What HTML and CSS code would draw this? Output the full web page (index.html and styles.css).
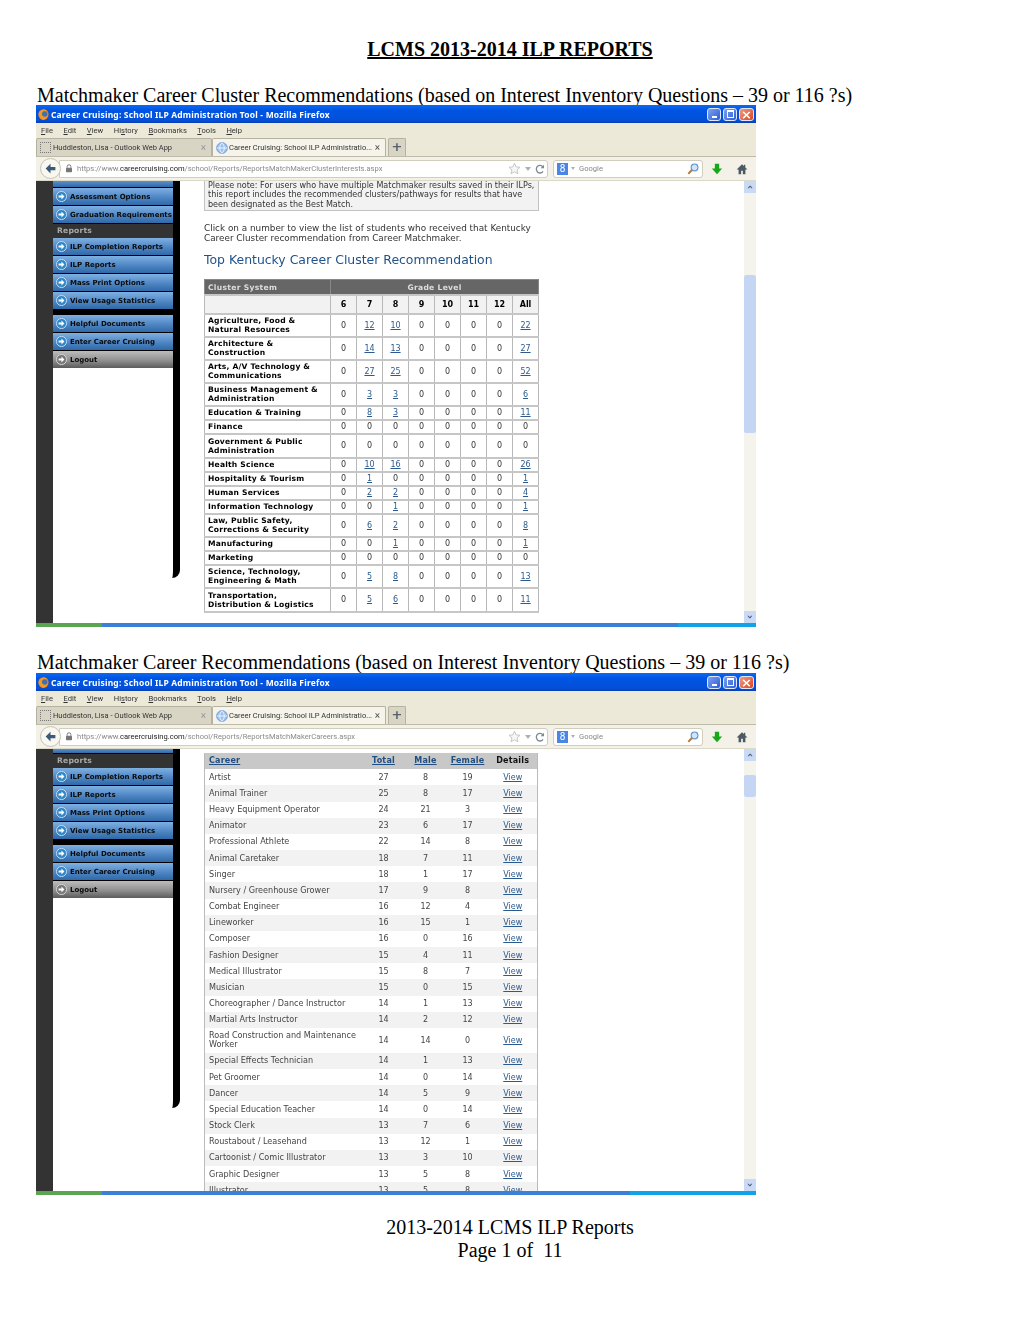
FILE: index.html
```html
<!DOCTYPE html>
<html lang="en">
<head>
  <meta charset="UTF-8" />
  <title>LCMS 2013-2014 ILP Reports</title>
  <link rel="stylesheet" href="styles.css">
</head>
<body>

  <svg class="icon-defs" xmlns="http://www.w3.org/2000/svg">
    <symbol id="i-firefox" viewBox="0 0 16 16">
      <circle cx="8" cy="8" r="7.5" fill="#e8761c"/>
      <circle cx="8.6" cy="8" r="4.6" fill="#3d6fb4"/>
      <path d="M1 6C2 2 6 .4 9 .7c3 .3 5 2 6 4.6-1.4-1.8-3.2-2.4-5-2.3C7.400 3.200 5.600 5 5.800 7.500 6 10 8.500 11.600 11 11c1.500-.4 2.800-1.400 3.600-2.800C14.200 12 11.500 15.500 8 15.500 3.800 15.500.5 11 1 6z" fill="#f09a22"/>
    </symbol>
    <symbol id="i-globe" viewBox="0 0 16 16">
      <circle cx="8" cy="8" r="7.2" fill="#9cc0ec" stroke="#5b8fd6"/>
      <path d="M1 8h14M8 1c-4 4-4 10 0 14M8 1c4 4 4 10 0 14" fill="none" stroke="#f4f8ff" stroke-width="1.200"/>
    </symbol>
    <symbol id="i-back" viewBox="0 0 16 16">
      <path d="M2 8l6-6v4h6v4H8v4z" fill="#3a5a78"/>
    </symbol>
    <symbol id="i-lock" viewBox="0 0 10 12">
      <path d="M2.500 5V3.500a2.500 2.500 0 015 0V5" fill="none" stroke="#777" stroke-width="1.300"/>
      <rect x="1" y="5" width="8" height="6" rx="1" fill="#777"/>
    </symbol>
    <symbol id="i-star" viewBox="0 0 16 16">
      <path d="M8 1.500l2 4.500 4.800.5-3.600 3.200 1 4.800L8 12.100 3.800 14.500l1-4.800L1.200 6.500 6 6z" fill="#f6f6f2" stroke="#b9bdc2"/>
    </symbol>
    <symbol id="i-reload" viewBox="0 0 12 12">
      <path d="M10 4.200A4.200 4.200 0 102 7.800a4.200 4.200 0 007.600 1" fill="none" stroke="#7f8c96" stroke-width="1.600"/>
      <path d="M10.800 1v4.200H6.600z" fill="#7f8c96"/>
    </symbol>
    <symbol id="i-glass" viewBox="0 0 14 14">
      <circle cx="8.800" cy="5.200" r="4" fill="#cfe6fa" stroke="#5f92c4" stroke-width="1.200"/>
      <path d="M5.800 8.200L1.500 12.500" stroke="#b57a3c" stroke-width="2.200"/>
    </symbol>
    <symbol id="i-down" viewBox="0 0 14 14">
      <path d="M4.500 1h5v5.500H13L7 13 1 6.500h3.500z" fill="#17a81a"/>
    </symbol>
    <symbol id="i-home" viewBox="0 0 14 14">
      <path d="M7 1.500L.8 7.500h2.200V13h3V9h2v4h3V7.500h2.200L10.800 5V2H9.300v1.500z" fill="#4c5a63"/>
    </symbol>
    <symbol id="i-go" viewBox="0 0 12 12">
      <circle cx="6" cy="6" r="5.500" fill="#2f86c9" stroke="#cfe3f4"/>
      <path d="M6 2.800L9.200 6 6 9.200V7.200H2.800V4.800H6z" fill="#fff"/>
    </symbol>
    <symbol id="i-go-grey" viewBox="0 0 12 12">
      <circle cx="6" cy="6" r="5.500" fill="#777" stroke="#ddd"/>
      <path d="M6 2.800L9.200 6 6 9.200V7.200H2.800V4.800H6z" fill="#fff"/>
    </symbol>
  </svg>

  <h1 class="doc-title">LCMS 2013-2014 ILP REPORTS</h1>

  <h2 class="doc-heading">Matchmaker Career Cluster Recommendations (based on Interest Inventory Questions – 39 or 116 ?s)</h2>

  <div class="shot shot-clusters">
    <div class="titlebar">
      <svg class="ff-logo"><use href="#i-firefox"/></svg>
      <span class="titlebar-text">Career Cruising: School ILP Administration Tool - Mozilla Firefox</span>
      <span class="win-btn"><i class="win-min"></i></span>
      <span class="win-btn"><i class="win-max"></i></span>
      <span class="win-btn win-close">×</span>
    </div>
    <div class="menubar">
      <span><u>F</u>ile</span><span><u>E</u>dit</span><span><u>V</u>iew</span><span>Hi<u>s</u>tory</span><span><u>B</u>ookmarks</span><span><u>T</u>ools</span><span><u>H</u>elp</span>
    </div>
    <div class="tabbar">
      <div class="tab"><i class="tab-blank"></i><span class="tab-label">Huddleston, Lisa - Outlook Web App</span><span class="tab-x">×</span></div>
      <div class="tab tab-active"><svg class="tab-globe"><use href="#i-globe"/></svg><span class="tab-label">Career Cruising: School ILP Administratio...</span><span class="tab-x">×</span></div>
      <div class="tab-new">+</div>
    </div>
    <div class="navbar">
      <div class="back-btn"><svg><use href="#i-back"/></svg></div>
      <div class="urlbar">
        <svg class="url-lock"><use href="#i-lock"/></svg>
        <span class="url-text">https://www.<b>careercruising.com</b>/school/Reports/ReportsMatchMakerClusterInterests.aspx</span>
        <svg class="url-star"><use href="#i-star"/></svg>
        <i class="caret"></i>
        <svg class="url-reload"><use href="#i-reload"/></svg>
      </div>
      <div class="searchbar">
        <span class="g-box">8</span><i class="caret"></i>
        <span class="search-text">Google</span>
        <svg class="search-glass"><use href="#i-glass"/></svg>
      </div>
      <svg class="tool-down"><use href="#i-down"/></svg>
      <svg class="tool-home"><use href="#i-home"/></svg>
    </div>
    <div class="viewport">
      <div class="rail"></div>
      <div class="side">
        <div class="side-nav">
          <div class="nav-cut nav-cut-a"></div>
          <a class="nav-btn"><svg><use href="#i-go"/></svg>Assessment Options</a>
          <a class="nav-btn"><svg><use href="#i-go"/></svg>Graduation Requirements</a>
          <div class="nav-label">Reports</div>
          <a class="nav-btn"><svg><use href="#i-go"/></svg>ILP Completion Reports</a>
          <a class="nav-btn"><svg><use href="#i-go"/></svg>ILP Reports</a>
          <a class="nav-btn"><svg><use href="#i-go"/></svg>Mass Print Options</a>
          <a class="nav-btn nav-last"><svg><use href="#i-go"/></svg>View Usage Statistics</a>
          <a class="nav-btn"><svg><use href="#i-go"/></svg>Helpful Documents</a>
          <a class="nav-btn"><svg><use href="#i-go"/></svg>Enter Career Cruising</a>
          <a class="nav-btn nav-grey"><svg><use href="#i-go-grey"/></svg>Logout</a>
        </div>
      </div>
      <div class="main">
        <div class="note">Please note: For users who have multiple Matchmaker results saved in their ILPs, this report includes the recommended clusters/pathways for results that have been designated as the Best Match.</div>
        <p class="intro">Click on a number to view the list of students who received that Kentucky Career Cluster recommendation from Career Matchmaker.</p>
        <h3 class="report-title">Top Kentucky Career Cluster Recommendation</h3>
        <table class="cluster-table">
          <colgroup><col class="col-name"><col span="8" class="col-grade"></colgroup>
          <tr class="cluster-head"><th>Cluster System</th><th colspan="8">Grade Level</th></tr>
          <tr class="cluster-sub"><th></th><th>6</th><th>7</th><th>8</th><th>9</th><th>10</th><th>11</th><th>12</th><th>All</th></tr>
          <tr class="two"><th>Agriculture, Food &amp;<br>Natural Resources</th><td>0</td><td><a>12</a></td><td><a>10</a></td><td>0</td><td>0</td><td>0</td><td>0</td><td><a>22</a></td></tr>
          <tr class="two"><th>Architecture &amp;<br>Construction</th><td>0</td><td><a>14</a></td><td><a>13</a></td><td>0</td><td>0</td><td>0</td><td>0</td><td><a>27</a></td></tr>
          <tr class="two"><th>Arts, A/V Technology &amp;<br>Communications</th><td>0</td><td><a>27</a></td><td><a>25</a></td><td>0</td><td>0</td><td>0</td><td>0</td><td><a>52</a></td></tr>
          <tr class="two"><th>Business Management &amp;<br>Administration</th><td>0</td><td><a>3</a></td><td><a>3</a></td><td>0</td><td>0</td><td>0</td><td>0</td><td><a>6</a></td></tr>
          <tr class="one"><th>Education &amp; Training</th><td>0</td><td><a>8</a></td><td><a>3</a></td><td>0</td><td>0</td><td>0</td><td>0</td><td><a>11</a></td></tr>
          <tr class="one"><th>Finance</th><td>0</td><td>0</td><td>0</td><td>0</td><td>0</td><td>0</td><td>0</td><td>0</td></tr>
          <tr class="two tall"><th>Government &amp; Public<br>Administration</th><td>0</td><td>0</td><td>0</td><td>0</td><td>0</td><td>0</td><td>0</td><td>0</td></tr>
          <tr class="one"><th>Health Science</th><td>0</td><td><a>10</a></td><td><a>16</a></td><td>0</td><td>0</td><td>0</td><td>0</td><td><a>26</a></td></tr>
          <tr class="one"><th>Hospitality &amp; Tourism</th><td>0</td><td><a>1</a></td><td>0</td><td>0</td><td>0</td><td>0</td><td>0</td><td><a>1</a></td></tr>
          <tr class="one"><th>Human Services</th><td>0</td><td><a>2</a></td><td><a>2</a></td><td>0</td><td>0</td><td>0</td><td>0</td><td><a>4</a></td></tr>
          <tr class="one"><th>Information Technology</th><td>0</td><td>0</td><td><a>1</a></td><td>0</td><td>0</td><td>0</td><td>0</td><td><a>1</a></td></tr>
          <tr class="two"><th>Law, Public Safety,<br>Corrections &amp; Security</th><td>0</td><td><a>6</a></td><td><a>2</a></td><td>0</td><td>0</td><td>0</td><td>0</td><td><a>8</a></td></tr>
          <tr class="one"><th>Manufacturing</th><td>0</td><td>0</td><td><a>1</a></td><td>0</td><td>0</td><td>0</td><td>0</td><td><a>1</a></td></tr>
          <tr class="one"><th>Marketing</th><td>0</td><td>0</td><td>0</td><td>0</td><td>0</td><td>0</td><td>0</td><td>0</td></tr>
          <tr class="two"><th>Science, Technology,<br>Engineering &amp; Math</th><td>0</td><td><a>5</a></td><td><a>8</a></td><td>0</td><td>0</td><td>0</td><td>0</td><td><a>13</a></td></tr>
          <tr class="two tall"><th>Transportation,<br>Distribution &amp; Logistics</th><td>0</td><td><a>5</a></td><td><a>6</a></td><td>0</td><td>0</td><td>0</td><td>0</td><td><a>11</a></td></tr>
        </table>
      </div>
      <div class="scrollbar">
        <div class="scroll-btn">‹</div>
        <div class="scroll-thumb"></div>
        <div class="scroll-btn scroll-down">‹</div>
      </div>
    </div>
    <div class="statusbar"><i class="status-green"></i><i class="status-blue"></i><i class="status-cyan"></i></div>
  </div>

  <h2 class="doc-heading doc-heading-next">Matchmaker Career Recommendations (based on Interest Inventory Questions – 39 or 116 ?s)</h2>

  <div class="shot shot-careers">
    <div class="titlebar">
      <svg class="ff-logo"><use href="#i-firefox"/></svg>
      <span class="titlebar-text">Career Cruising: School ILP Administration Tool - Mozilla Firefox</span>
      <span class="win-btn"><i class="win-min"></i></span>
      <span class="win-btn"><i class="win-max"></i></span>
      <span class="win-btn win-close">×</span>
    </div>
    <div class="menubar">
      <span><u>F</u>ile</span><span><u>E</u>dit</span><span><u>V</u>iew</span><span>Hi<u>s</u>tory</span><span><u>B</u>ookmarks</span><span><u>T</u>ools</span><span><u>H</u>elp</span>
    </div>
    <div class="tabbar">
      <div class="tab"><i class="tab-blank"></i><span class="tab-label">Huddleston, Lisa - Outlook Web App</span><span class="tab-x">×</span></div>
      <div class="tab tab-active"><svg class="tab-globe"><use href="#i-globe"/></svg><span class="tab-label">Career Cruising: School ILP Administratio...</span><span class="tab-x">×</span></div>
      <div class="tab-new">+</div>
    </div>
    <div class="navbar">
      <div class="back-btn"><svg><use href="#i-back"/></svg></div>
      <div class="urlbar">
        <svg class="url-lock"><use href="#i-lock"/></svg>
        <span class="url-text">https://www.<b>careercruising.com</b>/school/Reports/ReportsMatchMakerCareers.aspx</span>
        <svg class="url-star"><use href="#i-star"/></svg>
        <i class="caret"></i>
        <svg class="url-reload"><use href="#i-reload"/></svg>
      </div>
      <div class="searchbar">
        <span class="g-box">8</span><i class="caret"></i>
        <span class="search-text">Google</span>
        <svg class="search-glass"><use href="#i-glass"/></svg>
      </div>
      <svg class="tool-down"><use href="#i-down"/></svg>
      <svg class="tool-home"><use href="#i-home"/></svg>
    </div>
    <div class="viewport">
      <div class="rail"></div>
      <div class="side">
        <div class="side-nav">
          <div class="nav-cut nav-cut-b"></div>
          <div class="nav-label">Reports</div>
          <a class="nav-btn"><svg><use href="#i-go"/></svg>ILP Completion Reports</a>
          <a class="nav-btn"><svg><use href="#i-go"/></svg>ILP Reports</a>
          <a class="nav-btn"><svg><use href="#i-go"/></svg>Mass Print Options</a>
          <a class="nav-btn nav-last"><svg><use href="#i-go"/></svg>View Usage Statistics</a>
          <a class="nav-btn"><svg><use href="#i-go"/></svg>Helpful Documents</a>
          <a class="nav-btn"><svg><use href="#i-go"/></svg>Enter Career Cruising</a>
          <a class="nav-btn nav-grey"><svg><use href="#i-go-grey"/></svg>Logout</a>
        </div>
      </div>
      <div class="main">
        <table class="career-table">
          <colgroup><col class="col-career"><col class="col-num"><col class="col-num"><col class="col-num"><col class="col-view"></colgroup>
          <tr class="career-head"><th><a>Career</a></th><th><a>Total</a></th><th><a>Male</a></th><th><a>Female</a></th><th>Details</th></tr>
          <tr><td>Artist</td><td>27</td><td>8</td><td>19</td><td><a>View</a></td></tr>
          <tr><td>Animal Trainer</td><td>25</td><td>8</td><td>17</td><td><a>View</a></td></tr>
          <tr><td>Heavy Equipment Operator</td><td>24</td><td>21</td><td>3</td><td><a>View</a></td></tr>
          <tr><td>Animator</td><td>23</td><td>6</td><td>17</td><td><a>View</a></td></tr>
          <tr><td>Professional Athlete</td><td>22</td><td>14</td><td>8</td><td><a>View</a></td></tr>
          <tr><td>Animal Caretaker</td><td>18</td><td>7</td><td>11</td><td><a>View</a></td></tr>
          <tr><td>Singer</td><td>18</td><td>1</td><td>17</td><td><a>View</a></td></tr>
          <tr><td>Nursery / Greenhouse Grower</td><td>17</td><td>9</td><td>8</td><td><a>View</a></td></tr>
          <tr><td>Combat Engineer</td><td>16</td><td>12</td><td>4</td><td><a>View</a></td></tr>
          <tr><td>Lineworker</td><td>16</td><td>15</td><td>1</td><td><a>View</a></td></tr>
          <tr><td>Composer</td><td>16</td><td>0</td><td>16</td><td><a>View</a></td></tr>
          <tr><td>Fashion Designer</td><td>15</td><td>4</td><td>11</td><td><a>View</a></td></tr>
          <tr><td>Medical Illustrator</td><td>15</td><td>8</td><td>7</td><td><a>View</a></td></tr>
          <tr><td>Musician</td><td>15</td><td>0</td><td>15</td><td><a>View</a></td></tr>
          <tr><td>Choreographer / Dance Instructor</td><td>14</td><td>1</td><td>13</td><td><a>View</a></td></tr>
          <tr><td>Martial Arts Instructor</td><td>14</td><td>2</td><td>12</td><td><a>View</a></td></tr>
          <tr class="career-wrap"><td>Road Construction and Maintenance<br>Worker</td><td>14</td><td>14</td><td>0</td><td><a>View</a></td></tr>
          <tr><td>Special Effects Technician</td><td>14</td><td>1</td><td>13</td><td><a>View</a></td></tr>
          <tr><td>Pet Groomer</td><td>14</td><td>0</td><td>14</td><td><a>View</a></td></tr>
          <tr><td>Dancer</td><td>14</td><td>5</td><td>9</td><td><a>View</a></td></tr>
          <tr><td>Special Education Teacher</td><td>14</td><td>0</td><td>14</td><td><a>View</a></td></tr>
          <tr><td>Stock Clerk</td><td>13</td><td>7</td><td>6</td><td><a>View</a></td></tr>
          <tr><td>Roustabout / Leasehand</td><td>13</td><td>12</td><td>1</td><td><a>View</a></td></tr>
          <tr><td>Cartoonist / Comic Illustrator</td><td>13</td><td>3</td><td>10</td><td><a>View</a></td></tr>
          <tr><td>Graphic Designer</td><td>13</td><td>5</td><td>8</td><td><a>View</a></td></tr>
          <tr><td>Illustrator</td><td>13</td><td>5</td><td>8</td><td><a>View</a></td></tr>
        </table>
      </div>
      <div class="scrollbar">
        <div class="scroll-btn">‹</div>
        <div class="scroll-thumb"></div>
        <div class="scroll-btn scroll-down">‹</div>
      </div>
    </div>
    <div class="statusbar"><i class="status-green"></i><i class="status-blue"></i><i class="status-cyan"></i></div>
  </div>

  <div class="doc-footer">
    <div>2013-2014 LCMS ILP Reports</div>
    <div>Page 1 of&nbsp; 11</div>
  </div>

</body>
</html>
```

FILE: styles.css
```css
body {
  margin: 0;
  padding: 37px 0 0;
  background: #fff;
  color: #000;
  font-family: "Liberation Serif", serif;
}

.icon-defs {
  display: none;
}

/* document text around the screenshots */
.doc-title {
  margin: 0 0 24px;
  font-size: 20px;
  line-height: 24px;
  font-weight: bold;
  text-align: center;
  text-decoration: underline;
}

.doc-heading {
  margin: 0 0 0 37px;
  font-size: 20px;
  line-height: 20px;
  font-weight: normal;
  white-space: nowrap;
}

.doc-heading-next {
  margin-top: 25px;
  margin-bottom: 1px;
}

.doc-footer {
  margin-top: 21px;
  font-size: 20px;
  line-height: 23px;
  text-align: center;
}

/* browser window */
.shot {
  width: 720px;
  height: 522px;
  margin-left: 36px;
  display: flex;
  flex-direction: column;
  overflow: hidden;
  filter: blur(0.35px);
  font-family: "DejaVu Sans", sans-serif;
}

.titlebar {
  height: 18px;
  flex: none;
  display: flex;
  align-items: center;
  padding: 0 2px;
  background: linear-gradient(#0a6af0, #0054e3 30%, #0350d8 85%, #0a3fb0);
}

.ff-logo {
  width: 11px;
  height: 11px;
  margin-right: 2px;
}

.titlebar-text {
  flex: 1;
  color: #fff;
  font-family: "Noto Sans", sans-serif;
  font-weight: bold;
  font-size: 8.450px;
  letter-spacing: 0.2px;
  white-space: nowrap;
}

.win-btn {
  width: 14px;
  height: 13px;
  margin-left: 2px;
  border: 1px solid #dfe8fb;
  border-radius: 3px;
  background: linear-gradient(135deg, #7da2ee, #2d5dd8);
  color: #fff;
  display: flex;
  align-items: center;
  justify-content: center;
  box-sizing: border-box;
  font-size: 13px;
  font-weight: bold;
  line-height: 1;
}

.win-close {
  width: 15px;
  background: linear-gradient(135deg, #f09a80, #d9451f);
}

.win-min {
  width: 5px;
  height: 2px;
  margin-top: 5px;
  background: #fff;
}

.win-max {
  width: 5px;
  height: 5px;
  border: 1px solid #fff;
  border-top-width: 2px;
}

.menubar {
  height: 15px;
  flex: none;
  display: flex;
  align-items: center;
  gap: 10.500px;
  padding-left: 5px;
  background: #ece9d8;
  font-family: "Roboto", sans-serif;
  font-size: 7.600px;
  color: #333;
}

.tabbar {
  height: 19px;
  flex: none;
  display: flex;
  align-items: flex-end;
  background: #ece9d8;
  border-bottom: 1px solid #bdbaa8;
  box-sizing: border-box;
}

.tab {
  width: 176px;
  height: 18px;
  display: flex;
  align-items: center;
  box-sizing: border-box;
  padding: 0 5px 0 3px;
  background: #d8d5c4;
  border: 1px solid #b5b2a2;
  border-bottom: none;
  border-radius: 2px 2px 0 0;
  font-family: "Roboto", sans-serif;
  font-size: 7.500px;
  color: #333;
  white-space: nowrap;
}

.tab-active {
  width: 174px;
  background: #f6f4ea;
}

.tab-blank {
  width: 9px;
  height: 9px;
  margin-right: 1px;
  border: 1px dotted #777;
}

.tab-globe {
  width: 12px;
  height: 12px;
  flex: none;
}

.tab-label {
  flex: 1;
  min-width: 0;
  padding-left: 1px;
  overflow: hidden;
}

.tab-x {
  flex: none;
  color: #999;
  font-size: 10px;
}

.tab-active .tab-x {
  color: #555;
}

.tab-new {
  width: 18px;
  height: 18px;
  margin-left: 2px;
  background: #d8d5c4;
  border: 1px solid #b5b2a2;
  border-bottom: none;
  box-sizing: border-box;
  border-radius: 2px 2px 0 0;
  color: #56616b;
  font-size: 13px;
  font-weight: bold;
  line-height: 15px;
  text-align: center;
}

.navbar {
  height: 24px;
  flex: none;
  display: flex;
  align-items: center;
  padding-left: 4px;
  background: #f4f2e8;
  border-bottom: 1px solid #dcd9c8;
  box-sizing: border-box;
}

.back-btn {
  position: relative;
  z-index: 1;
  width: 21px;
  height: 21px;
  flex: none;
  border: 1px solid #c4c2b4;
  border-radius: 50%;
  background: #f8f7f0;
  box-sizing: border-box;
  display: flex;
  align-items: center;
  justify-content: center;
}

.back-btn svg {
  width: 13px;
  height: 13px;
}

.urlbar {
  width: 489px;
  height: 18px;
  margin-left: -2px;
  flex: none;
  display: flex;
  align-items: center;
  box-sizing: border-box;
  padding: 0 2px 0 5px;
  background: #fff;
  border: 1px solid #d0cebf;
  border-radius: 0 3px 3px 0;
  font-family: "Roboto", sans-serif;
  font-size: 7.560px;
  color: #8a8a8a;
}

.url-lock {
  width: 8px;
  height: 9px;
  margin-right: 4px;
}

.url-text {
  flex: 1;
  white-space: nowrap;
}

.url-text b {
  font-weight: normal;
  color: #222;
}

.url-star {
  width: 13px;
  height: 13px;
}

.caret {
  width: 0;
  height: 0;
  margin: 0 4px;
  border-left: 3.500px solid transparent;
  border-right: 3.500px solid transparent;
  border-top: 4px solid #aab0b6;
}

.url-reload {
  width: 10px;
  height: 10px;
}

.searchbar {
  width: 150px;
  height: 18px;
  margin-left: 5px;
  flex: none;
  display: flex;
  align-items: center;
  box-sizing: border-box;
  padding: 0 3px;
  background: #fff;
  border: 1px solid #d0cebf;
  border-radius: 3px;
  font-family: "Roboto", sans-serif;
  font-size: 7.600px;
  color: #888;
}

.g-box {
  width: 11px;
  height: 12px;
  background: #4a86e8;
  color: #fff;
  font-size: 10px;
  line-height: 12px;
  text-align: center;
}

.searchbar .caret {
  margin: 0 4px 0 3px;
  border-left-width: 2.500px;
  border-right-width: 2.500px;
  border-top-width: 3px;
}

.search-text {
  flex: 1;
}

.search-glass {
  width: 12px;
  height: 12px;
}

.tool-down {
  width: 12px;
  height: 12px;
  margin-left: 8px;
}

.tool-home {
  width: 12px;
  height: 12px;
  margin-left: 13px;
}

/* page inside the browser */
.viewport {
  height: 442px;
  flex: none;
  display: flex;
  overflow: hidden;
  background: #fff;
}

.rail {
  width: 17px;
  flex: none;
  background: #333;
}

.side {
  width: 127px;
  flex: none;
  box-sizing: border-box;
  border-right: 7px solid #000;
  border-bottom-right-radius: 8px;
  background: #fff;
}

.shot-clusters .side {
  margin-bottom: 45px;
}

.shot-careers .side {
  margin-bottom: 83px;
}

.side-nav {
  background: #000;
  font-size: 7px;
}

.nav-cut {
  background: linear-gradient(#5b90c9, #2f69a8);
  margin-bottom: 1px;
}

.nav-cut-a {
  height: 6px;
}

.nav-cut-b {
  height: 4px;
}

.nav-label {
  height: 14px;
  padding-left: 4px;
  background: #333;
  color: #aaa;
  font-weight: bold;
  font-size: 7.600px;
  line-height: 14px;
  letter-spacing: 0.2px;
}

.nav-btn {
  height: 17px;
  margin-bottom: 1px;
  padding-left: 3px;
  display: flex;
  align-items: center;
  gap: 3px;
  background: linear-gradient(#7fb0e2, #4f86c4 55%, #2f69a8);
  color: #0a0a0a;
  font-weight: bold;
  white-space: nowrap;
}

.nav-btn svg {
  width: 11px;
  height: 11px;
  flex: none;
}

.nav-last {
  margin-bottom: 6px;
}

.nav-grey {
  margin-bottom: 0;
  background: linear-gradient(#bdbdbd, #909090 55%, #5c5c5c);
}

.main {
  width: 335px;
  margin-left: 24px;
  flex: none;
}

.note {
  box-sizing: border-box;
  padding: 0 3px 1px;
  background: #f2f2f2;
  border: 1px solid #c2c2c2;
  border-top: none;
  font-size: 8.050px;
  line-height: 9.300px;
  color: #333;
}

.intro {
  margin: 13px 0 0;
  font-size: 8.860px;
  line-height: 9.700px;
  color: #333;
}

.report-title {
  margin: 9px 0 11px;
  font-size: 12.450px;
  line-height: 16px;
  font-weight: normal;
  color: #1f5288;
}

.cluster-table,
.career-table {
  border-collapse: collapse;
  table-layout: fixed;
  width: 335px;
  font-size: 8px;
}

.cluster-table {
  border: 1px solid #bbb;
}

.col-name {
  width: 126px;
}

.col-grade {
  width: 26px;
}

.cluster-table th,
.cluster-table td {
  padding: 0;
  border-style: solid;
  border-color: #c6c6c6 #b8b8b8;
  border-width: 2px 1px;
}

.cluster-table td {
  text-align: center;
  color: #333;
}

.cluster-table a {
  color: #2b5a8e;
  text-decoration: underline;
}

.cluster-head {
  height: 15px;
  background: #666;
  color: #ddd;
  font-size: 7.600px;
  letter-spacing: 0.3px;
}

.cluster-head th {
  border-color: #888;
  border-width: 1px;
  text-align: center;
}

.cluster-head th:first-child {
  padding-left: 3px;
  text-align: left;
}

.cluster-sub {
  height: 19px;
  background: #f2f2f2;
}

.two {
  height: 23px;
}

.two.tall {
  height: 24px;
}

.one {
  height: 14px;
}

.two th,
.one th {
  padding-left: 3px;
  font-size: 7.600px;
  line-height: 9.200px;
  letter-spacing: 0.2px;
  color: #000;
  text-align: left;
  white-space: nowrap;
}

.career-table {
  width: 334px;
  margin-top: 4px;
  border-left: 1px solid #bbb;
  border-right: 1px solid #bbb;
}

.col-career {
  width: 158px;
}

.col-num {
  width: 42px;
}

.col-view {
  width: 49px;
}

.career-table th,
.career-table td {
  padding: 0;
  height: 16.180px;
  line-height: 9.200px;
  text-align: center;
}

.career-wrap td {
  height: 25px;
}

.career-table td {
  color: #444;
}

.career-table td:first-child {
  padding-left: 4px;
  text-align: left;
  font-size: 8.100px;
}

.career-table tr:nth-child(odd) td {
  background: #f2f2f2;
}

.career-table a {
  color: #2b5a8e;
  text-decoration: underline;
}

.career-head th {
  background: #c8c8c8;
  color: #111;
  letter-spacing: 0.2px;
}

.career-head th:first-child {
  padding-left: 4px;
  text-align: left;
}

.career-head a {
  color: #1f4e82;
}

.scrollbar {
  width: 12px;
  margin-left: auto;
  flex: none;
  display: flex;
  flex-direction: column;
  background: #f4f4ec;
}

.scroll-btn {
  height: 12px;
  flex: none;
  background: #cad9f4;
  color: #4a5a78;
  font-size: 10px;
  font-weight: bold;
  line-height: 12px;
  text-align: center;
  transform: rotate(90deg);
}

.scroll-down {
  margin-top: auto;
  transform: rotate(-90deg);
}

.scroll-thumb {
  background: #c5d6f5;
  border-radius: 2px;
}

.shot-clusters .scroll-thumb {
  height: 158px;
  margin-top: 82px;
}

.shot-careers .scroll-thumb {
  height: 22px;
  margin-top: 14px;
}

.statusbar {
  height: 4px;
  flex: none;
  display: flex;
}

.status-green {
  width: 66px;
  background: #5aa552;
}

.status-blue {
  flex: 1;
  background: #3b80d8;
}

.status-cyan {
  background: #12a2e8;
}

.shot-clusters .status-cyan {
  width: 78px;
}

.shot-careers .status-cyan {
  width: 126px;
}
```
